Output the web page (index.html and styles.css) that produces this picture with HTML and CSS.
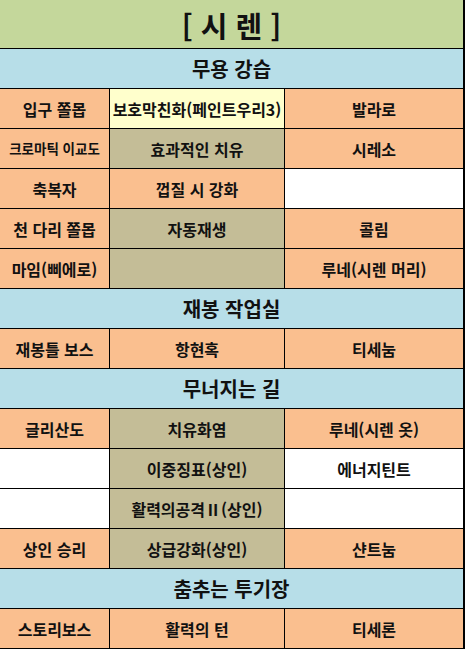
FILE: index.html
```html
<!DOCTYPE html>
<html lang="ko">
<head>
<meta charset="utf-8">
<link rel="stylesheet" href="styles.css">
</head>
<body>
<div class="sheet">
  <div class="cell title">[ 시 렌 ]</div>

  <div class="cell section">무용 강습</div>
  <div class="cell orange">입구 쫄몹</div>
  <div class="cell yellow">보호막친화(페인트우리3)</div>
  <div class="cell orange">발라로</div>

  <div class="cell orange small">크로마틱 이교도</div>
  <div class="cell tan">효과적인 치유</div>
  <div class="cell orange">시레소</div>

  <div class="cell orange">축복자</div>
  <div class="cell orange">껍질 시 강화</div>
  <div class="cell white"></div>

  <div class="cell orange">천 다리 쫄몹</div>
  <div class="cell tan">자동재생</div>
  <div class="cell orange">콜림</div>

  <div class="cell orange">마임(삐에로)</div>
  <div class="cell tan"></div>
  <div class="cell orange">루네(시렌 머리)</div>

  <div class="cell section">재봉 작업실</div>
  <div class="cell orange">재봉틀 보스</div>
  <div class="cell orange">항현혹</div>
  <div class="cell orange">티세눔</div>

  <div class="cell section">무너지는 길</div>
  <div class="cell orange">글리산도</div>
  <div class="cell tan">치유화염</div>
  <div class="cell orange">루네(시렌 옷)</div>

  <div class="cell white"></div>
  <div class="cell tan">이중징표(상인)</div>
  <div class="cell white">에너지틴트</div>

  <div class="cell white"></div>
  <div class="cell tan">활력의공격Ⅱ(상인)</div>
  <div class="cell white"></div>

  <div class="cell orange">상인 승리</div>
  <div class="cell tan">상급강화(상인)</div>
  <div class="cell orange">샨트눔</div>

  <div class="cell section">춤추는 투기장</div>
  <div class="cell orange">스토리보스</div>
  <div class="cell orange">활력의 턴</div>
  <div class="cell orange">티세론</div>
</div>
</body>
</html>
```
FILE: styles.css
```css
html, body {
  margin: 0;
  padding: 0;
  background: #ffffff;
}

.sheet {
  width: 465px;
  height: 649px;
  box-sizing: border-box;
  padding: 0 2px 1px 0;
  background: #000000;
  display: grid;
  grid-template-columns: 109px 174px 178px;
  grid-template-rows: 48px repeat(15, 39px);
  gap: 1px;
  font-family: "Noto Sans CJK KR", "Noto Sans", sans-serif;
  font-weight: 700;
  color: #111111;
}

.cell {
  display: flex;
  align-items: center;
  justify-content: center;
  font-size: 16px;
  white-space: nowrap;
  overflow: hidden;
  line-height: 1;
}

.title {
  grid-column: 1 / 4;
  background: #c4d79b;
  font-size: 29px;
  padding-top: 2px;
}

.section {
  grid-column: 1 / 4;
  background: #b7dee8;
  font-size: 20px;
}

.orange { background: #fabf8f; }
.tan { background: #c4bd97; }
.yellow { background: #ffffcc; }
.white { background: #ffffff; }

.small { font-size: 13.5px; }
```
